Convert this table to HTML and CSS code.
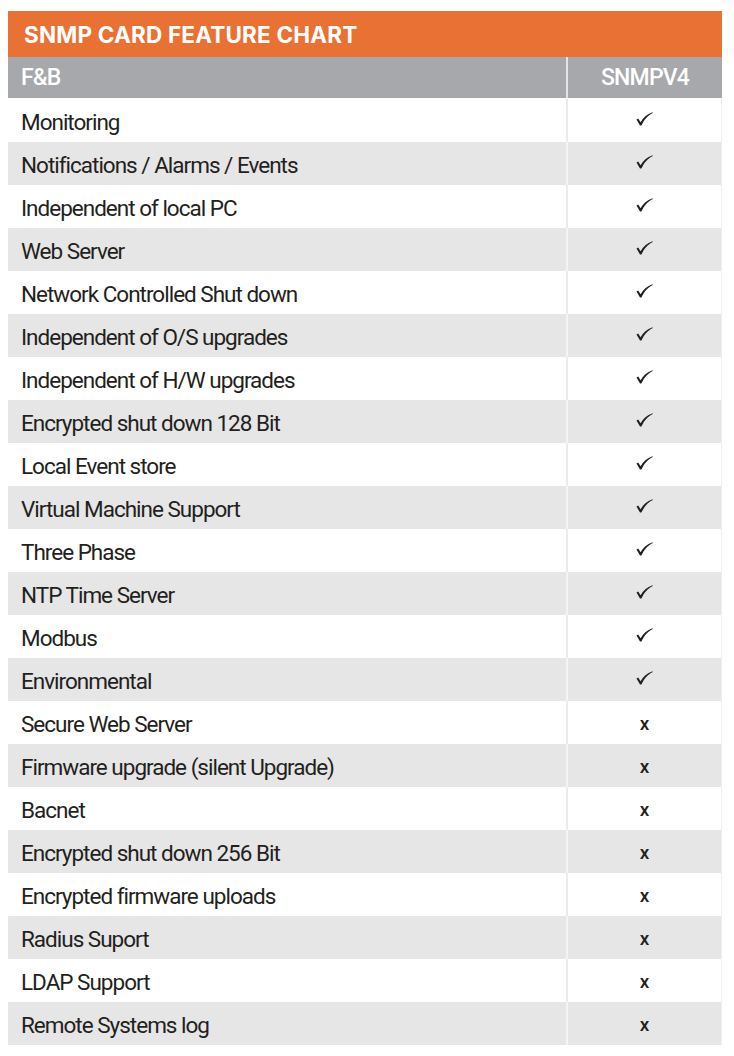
FILE: index.html
```html
<!DOCTYPE html>
<html>
<head>
<meta charset="utf-8">
<link rel="stylesheet" href="styles.css">
</head>
<body>
<div class="chart">
  <div class="title">SNMP CARD FEATURE CHART</div>
  <div class="head">
    <div class="hcell feat">F&amp;B</div>
    <div class="hcell val">SNMPV4</div>
  </div>
  <div class="rows" id="rows">
    <div class="row"><div class="feat">Monitoring</div><div class="val yes"></div></div>
    <div class="row"><div class="feat">Notifications / Alarms / Events</div><div class="val yes"></div></div>
    <div class="row"><div class="feat">Independent of local PC</div><div class="val yes"></div></div>
    <div class="row"><div class="feat">Web Server</div><div class="val yes"></div></div>
    <div class="row"><div class="feat">Network Controlled Shut down</div><div class="val yes"></div></div>
    <div class="row"><div class="feat">Independent of O/S upgrades</div><div class="val yes"></div></div>
    <div class="row"><div class="feat">Independent of H/W upgrades</div><div class="val yes"></div></div>
    <div class="row"><div class="feat">Encrypted shut down 128 Bit</div><div class="val yes"></div></div>
    <div class="row"><div class="feat">Local Event store</div><div class="val yes"></div></div>
    <div class="row"><div class="feat">Virtual Machine Support</div><div class="val yes"></div></div>
    <div class="row"><div class="feat">Three Phase</div><div class="val yes"></div></div>
    <div class="row"><div class="feat">NTP Time Server</div><div class="val yes"></div></div>
    <div class="row"><div class="feat">Modbus</div><div class="val yes"></div></div>
    <div class="row"><div class="feat">Environmental</div><div class="val yes"></div></div>
    <div class="row"><div class="feat">Secure Web Server</div><div class="val no">x</div></div>
    <div class="row"><div class="feat">Firmware upgrade (silent Upgrade)</div><div class="val no">x</div></div>
    <div class="row"><div class="feat">Bacnet</div><div class="val no">x</div></div>
    <div class="row"><div class="feat">Encrypted shut down 256 Bit</div><div class="val no">x</div></div>
    <div class="row"><div class="feat">Encrypted firmware uploads</div><div class="val no">x</div></div>
    <div class="row"><div class="feat">Radius Suport</div><div class="val no">x</div></div>
    <div class="row"><div class="feat">LDAP Support</div><div class="val no">x</div></div>
    <div class="row"><div class="feat">Remote Systems log</div><div class="val no">x</div></div>
  </div>
</div>
<svg width="0" height="0" class="defs">
  <defs>
    <symbol id="tick" viewBox="0 0 17 14">
      <path d="M0.5 7.6 L2.2 6.6 L4.6 10.2 C7.2 5.6 10.8 2.4 16.6 0.3 L16.8 0.9 C11.6 3.4 8.4 7.2 5.4 13.6 L4.0 13.6 Z" fill="#231f20"/>
    </symbol>
  </defs>
</svg>
<script>
document.querySelectorAll('.val.yes').forEach(function(el){
  el.innerHTML = '<svg class="tick" width="17" height="14"><use href="#tick"/></svg>';
});
</script>
</body>
</html>
```
FILE: styles.css
```css
html, body {
  margin: 0;
  padding: 0;
  background: #ffffff;
}
body {
  padding: 11px 12px 0 8px;
  font-family: Roboto, "Liberation Sans", sans-serif;
  color: #231f20;
}
.defs {
  position: absolute;
}
.chart {
  width: 714px;
}
.title {
  height: 46px;
  background: #e87133;
  color: #ffffff;
  font-family: Inter, Roboto, sans-serif;
  font-weight: 700;
  font-size: 22.5px;
  line-height: 47px;
  padding-left: 16px;
  letter-spacing: 0.2px;
}
.head {
  display: grid;
  grid-template-columns: 560px 154px;
  height: 41px;
  background: #a6a8ab;
  color: #ffffff;
  font-weight: 500;
  font-size: 23px;
}
.hcell {
  display: flex;
  align-items: center;
}
.head .feat {
  padding-left: 13px;
  border-right: 2px solid #e4e4e4;
  letter-spacing: -0.8px;
}
.head .val {
  justify-content: center;
  letter-spacing: -0.8px;
}
.rows {
  padding-top: 1px;
}
.row {
  display: grid;
  grid-template-columns: 560px 154px;
  height: 43px;
  font-size: 22.5px;
}
.row:nth-child(odd) {
  background: #ffffff;
}
.row:nth-child(even) {
  background: #e6e6e6;
}
.row .feat {
  display: flex;
  align-items: center;
  padding-left: 13px;
  padding-top: 2px;
  letter-spacing: -1px;
  border-right: 2px solid #ebebeb;
}
.row:nth-child(even) .feat {
  border-right-color: #f4f4f4;
}
.row .val {
  display: flex;
  align-items: center;
  justify-content: center;
  border-right: 1px solid #efefef;
}
.row .val.yes {
  padding-bottom: 4px;
}
.row .val.no {
  font-size: 19px;
  font-weight: 500;
  padding-top: 1px;
}
.tick {
  display: block;
}
```
